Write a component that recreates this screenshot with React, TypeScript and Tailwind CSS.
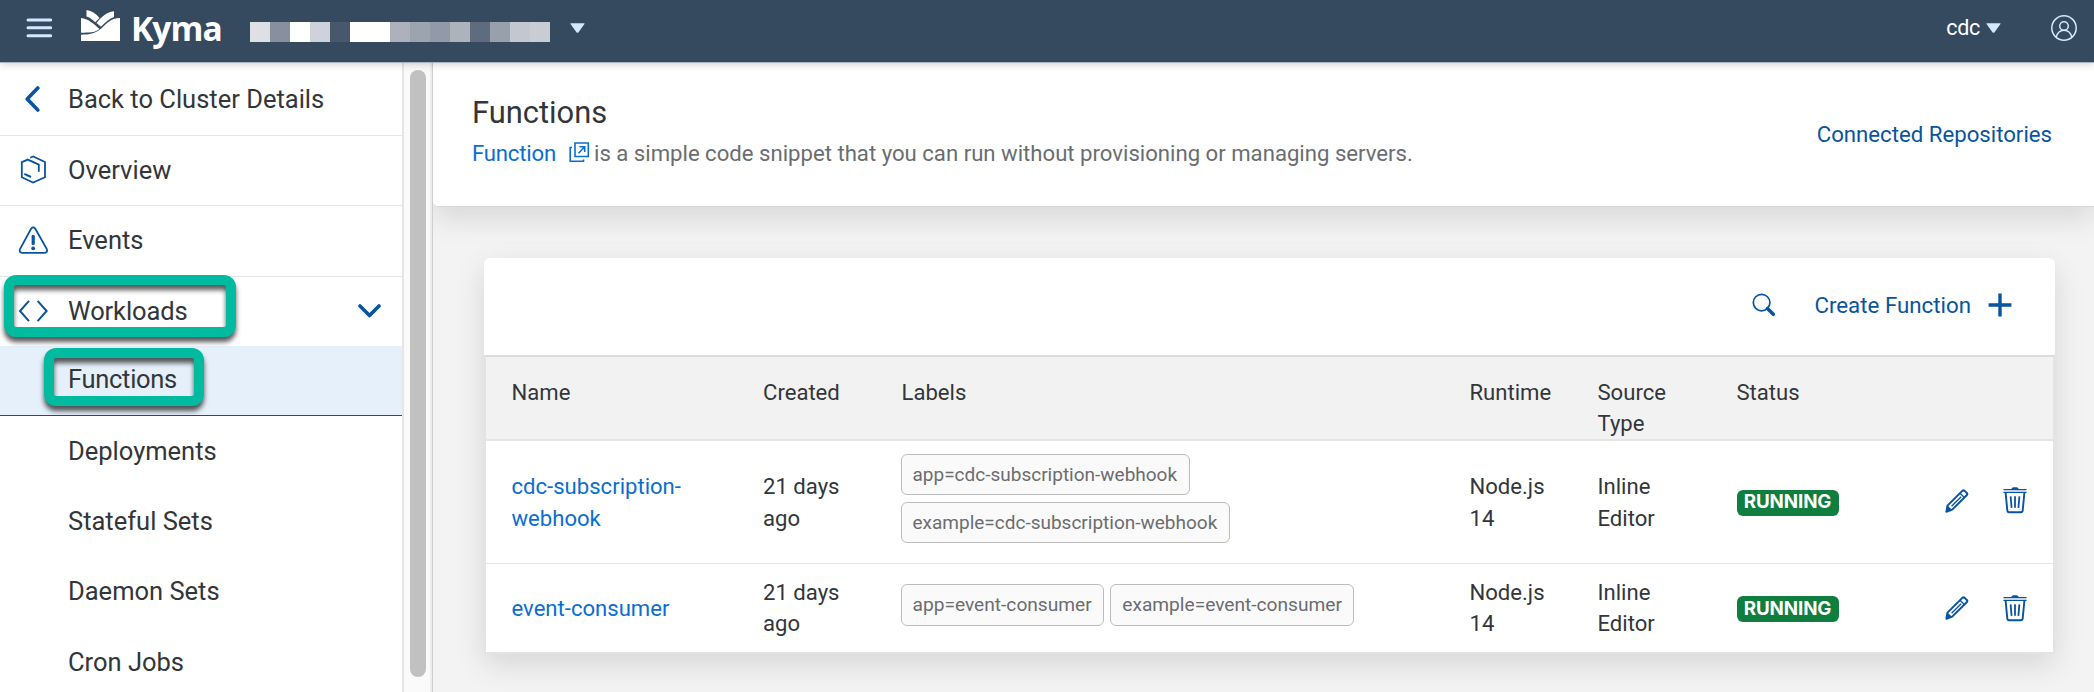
import type { ReactNode } from "react";

const maskedBlocks = [
  "bg-[#dde1e4]", "bg-[#87919e]", "bg-white", "bg-[#cfd2da]", "bg-[#48586c]",
  "bg-white", "bg-white", "bg-[#adb1bb]", "bg-[#9ba5af]", "bg-[#919aa6]",
  "bg-[#adb3bc]", "bg-[#5f6c7f]", "bg-[#98a1ab]", "bg-[#c3c7cf]", "bg-[#c9ccd3]",
];

function KymaLogo() {
  return (
    <svg width="39" height="31" viewBox="0 0 39 31" fill="white">
      <path d="M5.5 0C11 1 15 3.5 18.500 8L14.200 12.300C11.500 9.500 8.500 7.300 5.500 6.500Z" />
      <path d="M33 1.200V7C28.500 8.500 24.500 12 20 16.800L15.500 13C20.500 6.500 26 2 33 1.200Z" />
      <path d="M0 8C7 8.500 12.500 13.500 18.500 19C13.500 23.200 8 22.200 0 22.800Z" />
      <path d="M39 8V31H0V24.700C9 24.500 13.500 24 20 18.800C26 13.200 29.500 8.300 39 8Z" />
    </svg>
  );
}

function Triangle({ className }: { className: string }) {
  return (
    <svg className={className} width="15" height="10" viewBox="0 0 14 10" preserveAspectRatio="none">
      <path d="M0.800 0.300H13.200Q14 0.300 13.500 1L7.800 9.400Q7 10.300 6.200 9.400L0.500 1Q0 0.300 0.800 0.300Z" fill="#d1e8ff" />
    </svg>
  );
}

function Header() {
  return (
    <header className="relative z-20 flex h-[63px] shrink-0 items-start border-b border-[#a9b2bd] bg-[#354a5f] shadow-[0_1px_8px_rgba(0,0,0,0.2)]">
      <svg className="mt-[18px] ml-[26px]" width="26" height="20" viewBox="0 0 26 20" stroke="#d1e8ff" strokeWidth="3" strokeLinecap="round">
        <path d="M2 2H24.800M2 9.800H24.800M2 17.800H24.800" />
      </svg>
      <div className="mt-[10px] ml-[29px]">
        <KymaLogo />
      </div>
      <span className="mt-[5px] ml-[11px] w-[118px] font-['Open_Sans'] text-[33.500px] leading-[46px] font-bold tracking-[-0.900px] text-white">Kyma</span>
      <div className="mt-[22px] ml-px flex h-5 w-[300px]">
        {maskedBlocks.map((color, i) => (
          <span key={i} className={`h-5 w-5 ${color}`} />
        ))}
      </div>
      <Triangle className="mt-[23px] ml-5" />
      <div className="mt-[13px] mr-[17px] ml-auto flex h-[30px] items-center">
        <span className="text-[21.500px] tracking-[-0.300px] text-white">cdc</span>
        <Triangle className="ml-[6px]" />
        <svg className="ml-[50px]" width="26" height="26" viewBox="0 0 26 26" fill="none" stroke="#d1e8ff" strokeWidth="1.500">
          <circle cx="13" cy="13" r="12.200" />
          <circle cx="13" cy="11" r="4.300" />
          <path d="M5.200 22.300C6.300 18 9.200 15.300 13 15.300S19.700 18 20.800 22.300" />
        </svg>
      </div>
    </header>
  );
}

function NavItem({ icon, label, className = "", children }: { icon?: ReactNode; label: string; className?: string; children?: ReactNode }) {
  return (
    <li className={`flex items-center ${className}`}>
      <span className="ml-[18px] flex w-[50px] items-center">{icon}</span>
      <span>{label}</span>
      {children}
    </li>
  );
}

function Sidebar() {
  return (
    <nav className="relative flex w-[433px] shrink-0 bg-white">
      <ul className="w-[402px] text-[25.500px] leading-none whitespace-nowrap text-[#32363a]">
        <NavItem
          label="Back to Cluster Details"
          className="h-[73px] border-b border-[#e5e5e5] pt-px"
          icon={
            <svg className="mb-[2px] ml-[7px]" width="15" height="26" viewBox="0 0 15 26" fill="none" stroke="#0854a0" strokeWidth="3.600" strokeLinecap="round" strokeLinejoin="round">
              <path d="M12.800 2L2.200 13L12.800 24" />
            </svg>
          }
        />
        <NavItem
          label="Overview"
          className="h-[70px] border-b border-[#e5e5e5]"
          icon={
            <svg className="mb-[2px] ml-[2px]" width="26" height="30" viewBox="0 0 26 30" fill="none" stroke="#0854a0" strokeWidth="1.800">
              <path d="M10.200 2.800L13.200 1.400L25 7V22.200L13 27.600L1.800 22.200V7.200L7.800 4.600L18.800 9.600V16.800" />
              <path d="M5 18.600V19.200L11 22" strokeWidth="2" />
            </svg>
          }
        />
        <NavItem
          label="Events"
          className="h-[71px] border-b border-[#e5e5e5]"
          icon={
            <svg className="mb-[3px]" width="31" height="28" viewBox="0 0 31 28" fill="none" stroke="#0854a0" strokeWidth="1.800">
              <path d="M13.200 2.600Q15.200 0.300 17.200 2.600L28.800 23Q30 26.600 26.600 26.800H4.200Q0.700 26.600 2 23Z" />
              <path d="M15.200 10.300V17.500" strokeWidth="3.200" strokeLinecap="round" />
              <circle cx="15.200" cy="22.300" r="1.900" fill="#0854a0" stroke="none" />
            </svg>
          }
        />
        <NavItem
          label="Workloads"
          className="h-[69px] tracking-[-0.100px]"
          icon={
            <svg className="mb-[2px]" width="31" height="22" viewBox="0 0 31 22" fill="none" stroke="#0854a0" strokeWidth="2">
              <path d="M11 0.800L2 11L11 21.200M19.600 0.800L28.600 11L19.600 21.200" />
            </svg>
          }
        >
          <svg className="mr-[21px] mb-px ml-auto" width="23" height="14" viewBox="0 0 23 14" fill="none" stroke="#0854a0" strokeWidth="3.600" strokeLinecap="round" strokeLinejoin="round">
            <path d="M2 2L11.500 11.500L21 2" />
          </svg>
        </NavItem>
        <NavItem label="Functions" className="h-[70px] border-b border-[#0854a0] bg-[#e5f0fa] pb-px tracking-[-0.300px]" />
        <NavItem label="Deployments" className="h-[70px] pt-px" />
        <NavItem label="Stateful Sets" className="h-[70px] pt-px" />
        <NavItem label="Daemon Sets" className="h-[70px] pt-px" />
        <NavItem label="Cron Jobs" className="h-[70px] pt-[3px]" />
      </ul>
      <div className="w-[28px] border-l-2 border-[#e6e6e6] bg-[#fafafa] pt-[7px] pl-[6px]">
        <div className="h-[607px] w-4 rounded-full bg-[#c1c1c1]" />
      </div>
      <div className="w-[3px] border-r border-[#cfcfcf] bg-[#ededed]" />
      <div className="absolute top-[212px] left-1 h-[62px] w-[232px] rounded-xl border-10 border-[#00bba0] drop-shadow-[0_5px_2.500px_rgba(0,0,0,0.65)]" />
      <div className="absolute top-[285px] left-11 h-[58px] w-[160px] rounded-xl border-10 border-[#00bba0] drop-shadow-[0_5px_2.500px_rgba(0,0,0,0.65)]" />
    </nav>
  );
}

function Chip({ children, className }: { children: string; className: string }) {
  return (
    <span className={`flex items-center rounded-[6px] border border-[#bcbcbc] bg-[#fafafa] pr-[11.500px] pb-px pl-[11px] leading-none whitespace-nowrap text-[#6a6d70] ${className}`}>{children}</span>
  );
}

function Pencil() {
  return (
    <svg width="24" height="24" viewBox="0 0 24 24" fill="none" stroke="#0854a0" strokeWidth="2" strokeLinejoin="round">
      <path d="M2.500 16.600L17.300 1.900Q18.500 0.800 19.700 1.900L21.800 4Q22.800 5.100 21.700 6.200L7.200 20.600L1.400 22.700Z" />
      <path d="M15 4.300L19.400 8.500M6.600 17.200L16.200 7.800" strokeWidth="1.300" />
      <path d="M2.600 16.800L7 20.700L1.200 22.900Z" fill="#0854a0" stroke="none" />
    </svg>
  );
}

function Trash() {
  return (
    <svg width="24" height="27" viewBox="0 0 24 27" fill="none" stroke="#0854a0">
      <path d="M0.500 2.500H8Q9 0.300 10.500 0.300H13.500Q15 0.300 16 2.500H23.500" fill="#0854a0" stroke="none" />
      <path d="M0.500 2.700H23.500M0.500 5.400H23.500" strokeWidth="1.300" />
      <path d="M2.600 5.600L4.300 23.400Q4.500 25.300 6 25.300H18Q19.500 25.300 19.700 23.400L21.400 5.600" strokeWidth="1.900" />
      <path d="M7.600 9.300L8.600 20.800M12 9.300V20.800M16.400 9.300L15.400 20.800" strokeWidth="1.800" />
    </svg>
  );
}

const columns = "grid grid-cols-[251.500px_138.500px_568px_128px_139px_209px_1fr] pl-[25.500px]";

function Row({ name, labels, stacked, className }: { name: string; labels: string[]; stacked?: boolean; className: string }) {
  return (
    <div className={`${columns} items-center text-[22.100px] ${stacked ? "leading-[32px]" : "leading-[31px]"} ${className}`}>
      <a className="w-[190px] text-[#0a6ed1]">{name}</a>
      <span className="w-20">21 days ago</span>
      <div className={stacked ? "-ml-px flex flex-col items-start gap-[7px] pb-[7px]" : "-ml-px flex gap-[6px] pb-[6px]"}>
        {labels.map((l) => (
          <Chip key={l} className={stacked ? "h-[41px] text-[19px]" : "h-[42px] text-[19.150px]"}>{l}</Chip>
        ))}
      </div>
      <span className="w-20">Node.js 14</span>
      <span className="w-20">Inline Editor</span>
      <span className={`flex h-[26px] w-[102px] items-center justify-center rounded-[6px] bg-[#107e3e] font-['Inter'] text-[18.800px] leading-none font-bold tracking-[-0.100px] text-white ${stacked ? "mt-px pb-px" : "mt-[2px]"}`}>RUNNING</span>
      <div className={`-ml-px flex items-center gap-[34px] ${stacked ? "pb-[3px]" : ""}`}>
        <Pencil />
        <Trash />
      </div>
    </div>
  );
}

export default function App() {
  return (
    <div className="flex h-[692px] w-[2094px] flex-col overflow-hidden bg-[#f3f3f3] font-['Roboto',sans-serif] text-[#32363a]">
      <Header />
      <div className="flex min-h-0 flex-1">
        <Sidebar />
        <main className="flex-1 overflow-hidden">
          <section className="flex h-[144px] items-start justify-between rounded-bl-[5px] border-b border-[#d9d9d9] bg-white pr-[42px] pl-[39px] shadow-[0_10px_30px_rgba(0,0,0,0.12)]">
            <div>
              <h1 className="mt-[31px] text-[30.900px] leading-[38px]">Functions</h1>
              <p className="mt-[5px] flex items-center text-[22.150px] leading-[32px] whitespace-nowrap text-[#6a6d70]">
                <a className="w-[97px] tracking-[-0.200px] text-[#0a6ed1]">Function</a>
                <svg className="mb-[2px]" width="21" height="21" viewBox="0 0 21 21" fill="none" stroke="#0a6ed1" strokeWidth="1.600">
                  <path d="M6 1H19.300V14.500H6Z" />
                  <path d="M3 5.500H1.200V19.200H14.500V17.500" />
                  <path d="M9.500 11.200L15.500 5M10.500 4.700H15.700V10" />
                </svg>
                <span className="ml-1">is a simple code snippet that you can run without provisioning or managing servers.</span>
              </p>
            </div>
            <a className="mt-[55px] text-[22.200px] leading-[32px] text-[#0854a0]">Connected Repositories</a>
          </section>
          <section className="mt-[51px] ml-[51px] w-[1571px] rounded-t-[6px] bg-white shadow-[0_10px_30px_rgba(0,0,0,0.12)]">
            <div className="flex h-[97px] items-center justify-end pr-[43px] pb-[3px]">
              <svg width="24" height="24" viewBox="0 0 24 24" fill="none" stroke="#0854a0">
                <circle cx="9.600" cy="9.600" r="8.300" strokeWidth="1.700" />
                <path d="M15.500 15.500L21.300 21.300" strokeWidth="3.600" strokeLinecap="round" />
              </svg>
              <span className="ml-[38px] text-[22.300px] leading-[32px] text-[#0854a0]">Create Function</span>
              <svg className="ml-[17px]" width="24" height="24" viewBox="0 0 24 24" stroke="#0854a0" strokeWidth="3.400">
                <path d="M12 0.600V23.400M0.600 12H23.400" />
              </svg>
            </div>
            <div className="border-2 border-[#e4e4e4] border-t-[#dcdcdc]">
              <div className={`${columns} h-[84px] border-b-2 border-[#e5e5e5] bg-[#f2f2f2] pt-5 text-[22.100px] leading-[31px]`}>
                <span>Name</span>
                <span>Created</span>
                <span>Labels</span>
                <span>Runtime</span>
                <span className="w-20">Source Type</span>
                <span>Status</span>
              </div>
              <Row name="cdc-subscription-webhook" labels={["app=cdc-subscription-webhook", "example=cdc-subscription-webhook"]} stacked className="h-[123px] border-b border-[#e5e5e5]" />
              <Row name="event-consumer" labels={["app=event-consumer", "example=event-consumer"]} className="h-[88px]" />
            </div>
          </section>
        </main>
      </div>
    </div>
  );
}
